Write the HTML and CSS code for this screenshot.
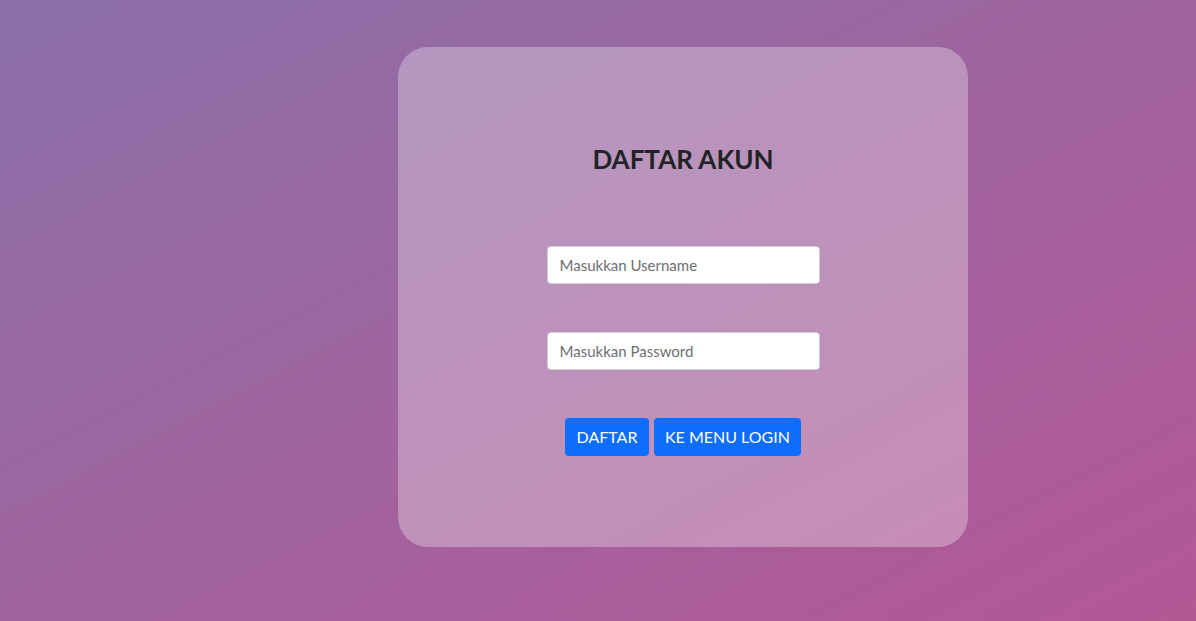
FILE: index.html
```
<!DOCTYPE html>
<html>
<head>
<meta charset="utf-8">
<link rel="stylesheet" href="styles.css">
</head>
<body>
<div class="page">
  <form class="card">
    <h1 class="title">DAFTAR AKUN</h1>
    <input class="field" type="text" placeholder="Masukkan Username">
    <input class="field" type="password" placeholder="Masukkan Password">
    <div class="actions">
      <button class="btn btn-short" type="button">DAFTAR</button>
      <button class="btn btn-long" type="button">KE MENU LOGIN</button>
    </div>
  </form>
</div>
</body>
</html>
```
FILE: styles.css
```
html, body {
  margin: 0;
  height: 100%;
}
body {
  background: linear-gradient(to bottom right, #8b70a9, #b45795);
  font-family: "Lato", "Open Sans", sans-serif;
}
.page {
  padding: 47px 0 0 398px;
}
.card {
  box-sizing: border-box;
  width: 570px;
  height: 500px;
  border-radius: 30px;
  background: rgba(255, 255, 255, 0.3);
  display: flex;
  flex-direction: column;
  align-items: center;
  padding-top: 98px;
}
.title {
  margin: 0 0 72px;
  font-size: 26px;
  line-height: 29px;
  font-weight: 700;
  color: #222326;
  letter-spacing: 0;
}
.field {
  box-sizing: border-box;
  width: 273px;
  height: 38px;
  margin: 0 0 48px;
  padding: 0 12px;
  border: 1px solid #cfd0d6;
  border-radius: 4px;
  background: #fff;
  font-family: inherit;
  font-size: 15px;
  color: #333;
  outline: none;
}
.field::placeholder {
  color: #6b6f74;
}
.actions {
  display: flex;
  gap: 5px;
}
.btn {
  height: 38px;
  padding: 0 0 2px;
  border: none;
  border-radius: 4px;
  background: #0d6efd;
  color: #fff;
  font-family: inherit;
  font-size: 16px;
  cursor: pointer;
}
.btn-short {
  width: 84px;
}
.btn-long {
  width: 147px;
}
```
